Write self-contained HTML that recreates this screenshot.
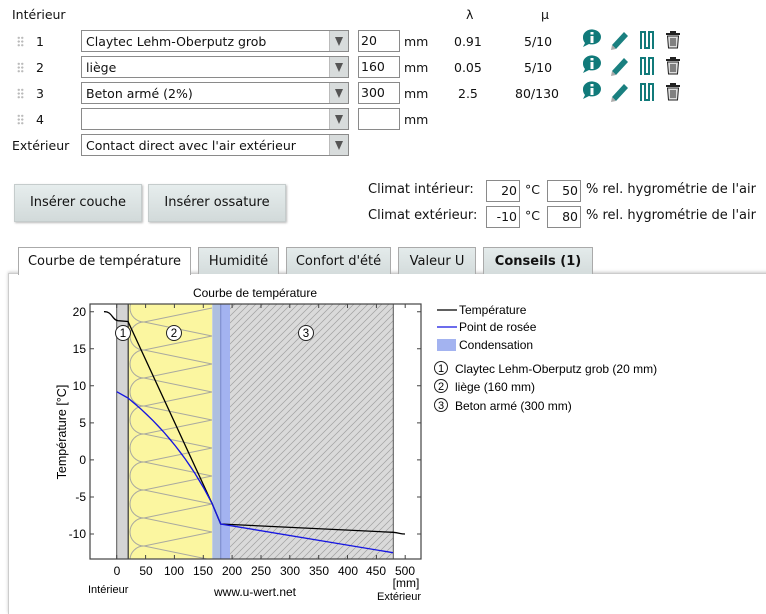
<!DOCTYPE html>
<html><head><meta charset="utf-8"><style>
body{margin:0;width:766px;height:604px;background:#fff;font-family:"DejaVu Sans","Liberation Sans",sans-serif;font-size:12.5px;color:#111;position:relative;overflow:hidden}
.a{position:absolute;white-space:nowrap}
.sel{position:absolute;left:81px;width:268px;height:22px;border:1px solid #8a8a8a;background:#fff;box-sizing:border-box}
.sel span{position:absolute;left:4px;top:3px}
.sel i{position:absolute;right:0;top:0;width:18px;height:20px;background:#d8dcdc;border-left:1px solid #bbb}
.sel i:after{content:"";position:absolute;left:5px;top:6px;border-left:4px solid transparent;border-right:4px solid transparent;border-top:9px solid #555}
.inp{position:absolute;height:22px;border:1px solid #8a8a8a;box-sizing:border-box;background:#fff;padding:2px 2px}
.btn{position:absolute;top:184px;height:38px;background:linear-gradient(#e6eded,#d2dada);border:1px solid #c5cccc;box-shadow:1px 1px 2px #bbb;box-sizing:border-box;text-align:center;line-height:36px;font-size:13px}
.tab{position:absolute;top:247px;height:27px;background:linear-gradient(#e4ebeb,#d4dcdc);border:1px solid #aaa;border-bottom:none;box-sizing:border-box;text-align:center;line-height:27px;font-size:13px}
.dots{position:absolute;left:17px;width:7px;height:11px;background:radial-gradient(circle,#bbb 1px,transparent 1.3px) 0 0/3.5px 3.7px}
</style></head><body>
<div class="a" style="left:12px;top:7px">Intérieur</div>
<div class="a" style="left:466px;top:7px">λ</div>
<div class="a" style="left:541px;top:7px">μ</div>

<div class="dots" style="top:36px"></div><div class="a" style="left:36px;top:34px">1</div>
<div class="sel" style="top:30px"><span>Claytec Lehm-Oberputz grob</span><i></i></div>
<div class="inp" style="left:358px;top:30px;width:42px">20</div><div class="a" style="left:404px;top:34px">mm</div>
<div class="a" style="left:454px;top:34px">0.91</div><div class="a" style="left:524px;top:34px">5/10</div>

<div class="dots" style="top:62px"></div><div class="a" style="left:36px;top:60px">2</div>
<div class="sel" style="top:56px"><span>liège</span><i></i></div>
<div class="inp" style="left:358px;top:56px;width:42px">160</div><div class="a" style="left:404px;top:60px">mm</div>
<div class="a" style="left:454px;top:60px">0.05</div><div class="a" style="left:524px;top:60px">5/10</div>

<div class="dots" style="top:88px"></div><div class="a" style="left:36px;top:86px">3</div>
<div class="sel" style="top:82px"><span>Beton armé (2%)</span><i></i></div>
<div class="inp" style="left:358px;top:82px;width:42px">300</div><div class="a" style="left:404px;top:86px">mm</div>
<div class="a" style="left:458px;top:86px">2.5</div><div class="a" style="left:515px;top:86px">80/130</div>

<div class="dots" style="top:114px"></div><div class="a" style="left:36px;top:112px">4</div>
<div class="sel" style="top:108px"><span></span><i></i></div>
<div class="inp" style="left:358px;top:108px;width:42px"></div><div class="a" style="left:404px;top:112px">mm</div>

<div class="a" style="left:12px;top:138px">Extérieur</div>
<div class="sel" style="top:134px"><span>Contact direct avec l'air extérieur</span><i></i></div>

<svg class="a" style="left:580px;top:28px" width="110" height="80">
<defs><g id="ic">
<path d="M3 9a9 7.5 0 1 1 6 7l-6 3 2-4a8 8 0 0 1-2-6z" fill="#117a7a"/>
<rect x="10.5" y="4" width="3" height="2.5" fill="#fff"/><rect x="10.5" y="8" width="3" height="7" fill="#fff"/>
<path d="M32 17l12-13 4 4-12 13z" fill="#1a8080"/><path d="M32 17l-1 5 5-1z" fill="#aaa"/>
<path d="M61 21V4h4v16h4V4h4v17" fill="none" stroke="#117a7a" stroke-width="2"/>
<rect x="86" y="5" width="14" height="2" fill="#222"/><rect x="90" y="3" width="6" height="2" fill="#222"/>
<path d="M87.5 8h11l-1 12h-9z" fill="#ddd" stroke="#222" stroke-width="1"/><path d="M91 10v8M93 10v8M95 10v8" stroke="#222"/>
</g></defs>
<use href="#ic" y="0"/><use href="#ic" y="26"/><use href="#ic" y="52"/>
</svg>

<div class="btn" style="left:14px;width:128px">Insérer couche</div>
<div class="btn" style="left:148px;width:138px">Insérer ossature</div>

<div class="a" style="left:368px;top:182px;font-size:13px">Climat intérieur:</div>
<div class="inp" style="left:486px;top:180px;width:34px;text-align:right">20</div>
<div class="a" style="left:525px;top:182px">°C</div>
<div class="inp" style="left:547px;top:180px;width:34px;text-align:right">50</div>
<div class="a" style="left:586px;top:182px;font-size:13px">% rel. hygrométrie de l'air</div>
<div class="a" style="left:368px;top:208px;font-size:13px">Climat extérieur:</div>
<div class="inp" style="left:486px;top:206px;width:34px;text-align:right">-10</div>
<div class="a" style="left:525px;top:208px">°C</div>
<div class="inp" style="left:547px;top:206px;width:34px;text-align:right">80</div>
<div class="a" style="left:586px;top:208px;font-size:13px">% rel. hygrométrie de l'air</div>

<div class="a" style="left:8px;top:273px;width:770px;height:340px;border-top:1px solid #ccc;border-left:1px solid #ccc;box-shadow:0 -1px 3px #ccc"></div>
<div class="tab" style="left:18px;width:173px;background:#fff;height:28px;z-index:2">Courbe de température</div>
<div class="tab" style="left:198px;width:81px">Humidité</div>
<div class="tab" style="left:286px;width:105px">Confort d'été</div>
<div class="tab" style="left:398px;width:78px">Valeur U</div>
<div class="tab" style="left:483px;width:110px;font-weight:bold">Conseils (1)</div>

<svg class="a" style="left:0;top:0" width="766" height="604" font-family="Liberation Sans, sans-serif" font-size="12">
<defs>
<pattern id="h" patternUnits="userSpaceOnUse" width="7" height="7"><rect width="7" height="7" fill="#dadada"/><path d="M-1 8L8 -1M-1 1L1 -1M6 8L8 6" stroke="#a0a0a0" stroke-width="0.7"/></pattern>
<clipPath id="c2"><rect x="128" y="304" width="85" height="255"/></clipPath>
</defs>
<text x="255" y="297" text-anchor="middle">Courbe de température</text>
<rect x="116.7" y="304" width="11.5" height="255" fill="#d4d4d4"/>
<rect x="128.2" y="304" width="84" height="255" fill="#fbf6a0"/>
<g clip-path="url(#c2)" fill="none" stroke="#a9a9a0" stroke-width="1">
<path d="M144 294A14 14 0 0 0 144 322M144 294L212 280M144 322L212 336"/>
<path d="M144 322A14 14 0 0 0 144 350M144 322L212 308M144 350L212 364"/>
<path d="M144 350A14 14 0 0 0 144 378M144 350L212 336M144 378L212 392"/>
<path d="M144 378A14 14 0 0 0 144 406M144 378L212 364M144 406L212 420"/>
<path d="M144 406A14 14 0 0 0 144 434M144 406L212 392M144 434L212 448"/>
<path d="M144 434A14 14 0 0 0 144 462M144 434L212 420M144 462L212 476"/>
<path d="M144 462A14 14 0 0 0 144 490M144 462L212 448M144 490L212 504"/>
<path d="M144 490A14 14 0 0 0 144 518M144 490L212 476M144 518L212 532"/>
<path d="M144 518A14 14 0 0 0 144 546M144 518L212 504M144 546L212 560"/>
<path d="M144 546A14 14 0 0 0 144 574M144 546L212 532"/>
</g>
<rect x="220.7" y="304" width="172.6" height="255" fill="url(#h)"/>
<rect x="212.3" y="304" width="8.4" height="255" fill="#aebfe0"/>
<rect x="220.7" y="304" width="9.3" height="255" fill="#a3b3f0"/>
<line x1="220.7" y1="304" x2="220.7" y2="559" stroke="#7f8fd0" stroke-width="1.2"/>
<line x1="128.2" y1="304" x2="128.2" y2="559" stroke="#333" stroke-width="1.2"/>
<line x1="116.7" y1="304" x2="116.7" y2="559" stroke="#555"/>
<line x1="393.3" y1="304" x2="393.3" y2="559" stroke="#555"/>
<rect x="90" y="304" width="331" height="255" fill="none" stroke="#444" stroke-width="1.2"/>
<g stroke="#444">
<path d="M90 311.7h4M90 348.8h4M90 385.8h4M90 422.9h4M90 459.9h4M90 497h4M90 534h4M421 311.7h-4M421 348.8h-4M421 385.8h-4M421 422.9h-4M421 459.9h-4M421 497h-4M421 534h-4"/>
<path d="M116.7 559v-4M145.6 559v-4M174.4 559v-4M203.3 559v-4M232.1 559v-4M261 559v-4M289.8 559v-4M318.7 559v-4M347.5 559v-4M376.4 559v-4M405.2 559v-4M116.7 304v4M145.6 304v4M174.4 304v4M203.3 304v4M232.1 304v4M261 304v4M289.8 304v4M318.7 304v4M347.5 304v4M376.4 304v4M405.2 304v4"/>
</g>
<g text-anchor="end"><text x="86" y="316">20</text><text x="86" y="353">15</text><text x="86" y="390">10</text><text x="86" y="427">5</text><text x="86" y="464">0</text><text x="86" y="501">-5</text><text x="86" y="538">-10</text></g>
<g text-anchor="middle"><text x="117" y="575">0</text><text x="146" y="575">50</text><text x="174" y="575">100</text><text x="203" y="575">150</text><text x="232" y="575">200</text><text x="261" y="575">250</text><text x="290" y="575">300</text><text x="319" y="575">350</text><text x="348" y="575">400</text><text x="376" y="575">450</text><text x="405" y="575">500</text>
<text x="406" y="587">[mm]</text><text x="399" y="600" font-size="11">Extérieur</text><text x="255" y="596">www.u-wert.net</text></g>
<text x="88" y="593" font-size="11">Intérieur</text>
<text transform="translate(66 432) rotate(-90)" text-anchor="middle" font-size="12.5">Température [°C]</text>
<g fill="#fff" stroke="#222"><circle cx="123" cy="333" r="7.5"/><circle cx="174" cy="333" r="7.5"/><circle cx="306" cy="333" r="7.5"/></g>
<g text-anchor="middle" font-size="11.5"><text x="123" y="337">1</text><text x="174" y="337">2</text><text x="306" y="337">3</text></g>
<path d="M104 311.7C112 311 112 320 118 320.7L128 321.5L212.3 504L220.7 524L393 532.3C400 533 400 534 405 534" fill="none" stroke="#000" stroke-width="1.3"/>
<path d="M116.7 391.7L128 398Q180 440 212.3 504L220.7 524L393 552.7" fill="none" stroke="#1515e0" stroke-width="1.3"/>
<line x1="437" y1="310" x2="457" y2="310" stroke="#000" stroke-width="1.3"/><text x="459" y="314">Température</text>
<line x1="437" y1="327" x2="457" y2="327" stroke="#1515e0" stroke-width="1.3"/><text x="459" y="331">Point de rosée</text>
<rect x="437" y="339" width="19" height="12" fill="#a3b3f0"/><text x="459" y="349">Condensation</text>
<g fill="#fff" stroke="#222"><circle cx="441" cy="368" r="6.5"/><circle cx="441" cy="386" r="6.5"/><circle cx="441" cy="405" r="6.5"/></g>
<g text-anchor="middle" font-size="11"><text x="441" y="372">1</text><text x="441" y="390">2</text><text x="441" y="409">3</text></g>
<text x="455" y="373">Claytec Lehm-Oberputz grob (20 mm)</text>
<text x="455" y="391">liège (160 mm)</text>
<text x="455" y="410">Beton armé (300 mm)</text>
</svg>
</body></html>
